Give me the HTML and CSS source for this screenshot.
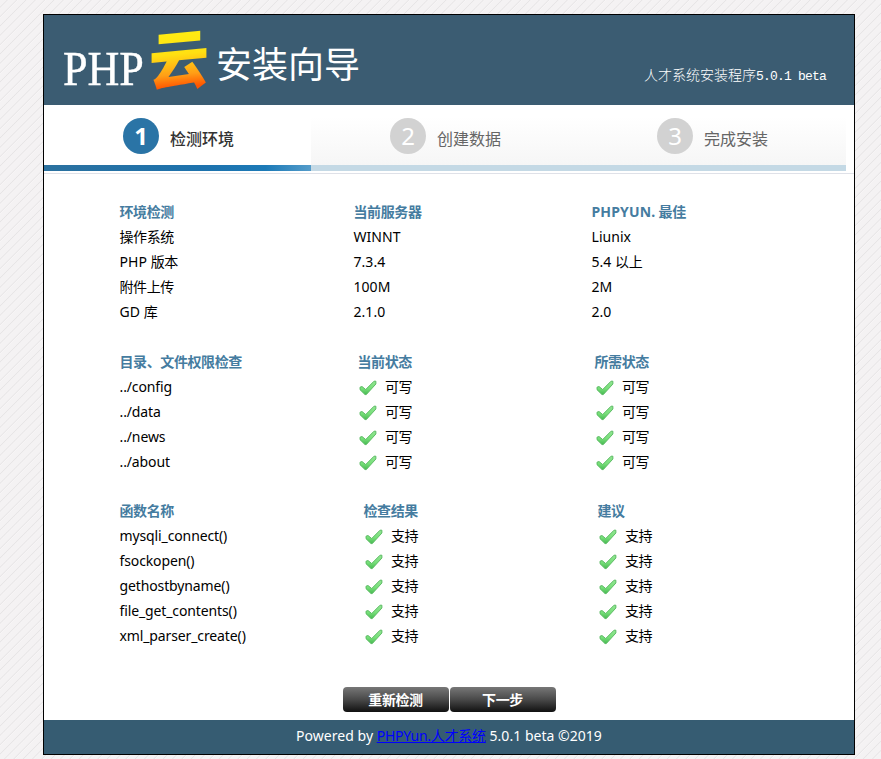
FILE: index.html
```html
<!DOCTYPE html>
<html lang="zh-CN">
<head>
<meta charset="utf-8">
<title>PHP云安装向导</title>
<link rel="stylesheet" href="styles.css">
</head>
<body>
<svg class="symbols" aria-hidden="true"><defs>
<linearGradient id="green" x1="0" y1="0" x2="0" y2="1"><stop offset="0" stop-color="#92e492"/><stop offset=".55" stop-color="#77df79"/><stop offset="1" stop-color="#46b950"/></linearGradient>
<symbol id="check" viewBox="0 0 18 16"><path d="M1 7.2L3 6.5L6.7 9.5L15 1.2L16.9 1.2L16.9 4L7.3 14.6L6 14.6L1 9.7Z" fill="url(#green)" stroke="#55b75d" stroke-width=".9" stroke-linejoin="round"/></symbol>
</defs></svg>
<div class="window">
  <header class="header">
    <div class="logo"><span class="logo-php">PHP</span><span class="logo-cloud">云</span><span class="logo-guide">安装向导</span></div>
    <div class="version"><span>人才系统安装程序</span><span class="mono">5.0.1 beta</span></div>
  </header>
  <nav class="steps">
    <div class="step active"><span class="number">1</span><span class="step-name">检测环境</span></div>
    <div class="step"><span class="number">2</span><span class="step-name">创建数据</span></div>
    <div class="step"><span class="number">3</span><span class="step-name">完成安装</span></div>
  </nav>
  <main class="content">
    <section class="group environment">
      <div class="row title"><span>环境检测</span><span>当前服务器</span><span><span class="latin">PHPYUN.</span> 最佳</span></div>
      <div class="row"><span>操作系统</span><span class="latin">WINNT</span><span class="latin">Liunix</span></div>
      <div class="row"><span><span class="latin">PHP </span>版本</span><span class="latin">7.3.4</span><span><span class="latin">5.4 </span>以上</span></div>
      <div class="row"><span>附件上传</span><span class="latin">100M</span><span class="latin">2M</span></div>
      <div class="row"><span><span class="latin">GD </span>库</span><span class="latin">2.1.0</span><span class="latin">2.0</span></div>
    </section>
    <section class="group directories">
      <div class="row title"><span>目录、文件权限检查</span><span>当前状态</span><span>所需状态</span></div>
      <div class="row"><span class="path">../config</span><span class="ok"><svg><use href="#check"/></svg>可写</span><span class="ok"><svg><use href="#check"/></svg>可写</span></div>
      <div class="row"><span class="path">../data</span><span class="ok"><svg><use href="#check"/></svg>可写</span><span class="ok"><svg><use href="#check"/></svg>可写</span></div>
      <div class="row"><span class="path">../news</span><span class="ok"><svg><use href="#check"/></svg>可写</span><span class="ok"><svg><use href="#check"/></svg>可写</span></div>
      <div class="row"><span class="path">../about</span><span class="ok"><svg><use href="#check"/></svg>可写</span><span class="ok"><svg><use href="#check"/></svg>可写</span></div>
    </section>
    <section class="group functions">
      <div class="row title"><span>函数名称</span><span>检查结果</span><span>建议</span></div>
      <div class="row"><span class="path">mysqli_connect()</span><span class="ok"><svg><use href="#check"/></svg>支持</span><span class="ok"><svg><use href="#check"/></svg>支持</span></div>
      <div class="row"><span class="path">fsockopen()</span><span class="ok"><svg><use href="#check"/></svg>支持</span><span class="ok"><svg><use href="#check"/></svg>支持</span></div>
      <div class="row"><span class="path">gethostbyname()</span><span class="ok"><svg><use href="#check"/></svg>支持</span><span class="ok"><svg><use href="#check"/></svg>支持</span></div>
      <div class="row"><span class="path">file_get_contents()</span><span class="ok"><svg><use href="#check"/></svg>支持</span><span class="ok"><svg><use href="#check"/></svg>支持</span></div>
      <div class="row"><span class="path">xml_parser_create()</span><span class="ok"><svg><use href="#check"/></svg>支持</span><span class="ok"><svg><use href="#check"/></svg>支持</span></div>
    </section>
    <div class="actions"><button>重新检测</button><button>下一步</button></div>
  </main>
  <footer class="footer"><span>Powered by <a href="#">PHPYun.人才系统</a> 5.0.1 beta ©2019</span></footer>
</div>
</body>
</html>
```
FILE: styles.css
```css
* { box-sizing: border-box; }
body {
  margin: 0;
  padding: 14px 0 4px 43px;
  height: 759px;
  overflow: hidden;
  background: repeating-linear-gradient(135deg, #f4f2f3 0, #f4f2f3 4.4px, #e6e4e5 5.2px, #f7f5f6 6.1px, #f4f2f3 6.6px);
  font: 14px "Noto Sans", "Noto Sans CJK SC", sans-serif;
  letter-spacing: -.4px;
  color: #000;
}
.symbols { position: absolute; width: 0; height: 0; }
.window { width: 812px; height: 741px; border: 1px solid #000; background: #fff; display: flex; flex-direction: column; }
.header { height: 90px; flex: none; background: #3b5c72; color: #fff; display: flex; justify-content: space-between; }
.logo { display: flex; align-items: center; height: 90px; padding-left: 19px; line-height: 90px; white-space: nowrap; letter-spacing: 0; }
.logo-php { font-family: "Liberation Serif", serif; font-size: 49px; width: 86px; padding-top: 17px; transform: scaleX(.9); transform-origin: left; -webkit-text-stroke: .4px #fff; }
.logo-cloud { font-family: "Noto Sans CJK SC", sans-serif; font-weight: 900; font-size: 60px; width: 64px; background: linear-gradient(#ffed12 20px, #ffe012 43px, #ff9e16 62px, #ff5500 74px); background-clip: text; -webkit-background-clip: text; color: transparent; transform: translateY(-4px) scaleY(1.07) skewY(-5deg); }
.logo-guide { font-family: "Noto Sans CJK SC", sans-serif; font-size: 36px; font-weight: 400; padding: 4px 0 0 3px; }
.version { padding: 50px 28px 0 0; height: 70px; line-height: 18px; letter-spacing: 0; display: flex; align-items: baseline; font-family: "Noto Sans CJK SC", sans-serif; font-weight: 300; }
.mono { font-family: "Liberation Mono", monospace; font-size: 13px; letter-spacing: -.8px; }
.steps { height: 69px; flex: none; border-bottom: 1px solid #dfe1e8; display: flex; }
.step { width: 267px; height: 66px; padding-left: 79px; display: flex; gap: 11px; border-bottom: 6px solid #c4d9e5; background: linear-gradient(#fff 12px, #f6f6f6); color: #666; letter-spacing: 0; }
.step:last-child { width: 268px; }
.step.active { color: #333; background: linear-gradient(90deg, #2b719f, #1d72ad 60%, #1c7ab7 83%, #559cca) bottom / 100% 6px no-repeat, #fff; border-bottom: 0; }
.number { width: 36px; height: 36px; margin-top: 13px; border-radius: 50%; background: #d2d2d2; color: #fff; font: 24px/36px "Noto Sans", sans-serif; text-align: center; }
.active .number { background: #2a74a6; font-weight: 700; }
.step-name { font-size: 16px; line-height: 24px; margin-top: 22px; }
.active .step-name { font-weight: 500; }
.content { height: 546px; padding: 24.5px 0 0 75.5px; }
.group { line-height: 25px; height: 150px; }
.directories { height: 149px; }
.functions { height: 189px; }
.row { display: grid; grid-template-columns: 234px 238px 180px; height: 25px; white-space: nowrap; }
.directories .row { grid-template-columns: 238px 237px 180px; }
.functions .row { grid-template-columns: 244px 234px 180px; }
.latin { letter-spacing: .05px; }
.path { letter-spacing: -.12px; }
.title { color: #457ca0; font-weight: 700; }
.title .latin { letter-spacing: .15px; }
.ok { display: flex; align-items: center; }
.ok svg { width: 18px; height: 16px; margin: 3px 8.5px 0 1px; }
.actions { display: flex; gap: 1px; padding-left: 223px; }
button { width: 106px; height: 25px; padding: 0; border: 0; border-radius: 4px; background: linear-gradient(#777, #494949 50%, #111); color: #fff; font: 700 14px/25px "Noto Sans CJK SC", sans-serif; letter-spacing: -.4px; }
.footer { height: 34px; background: #365c72; color: #fff; line-height: 31px; text-align: center; letter-spacing: .03px; }
.footer a { color: #00f; letter-spacing: -.25px; }
```
